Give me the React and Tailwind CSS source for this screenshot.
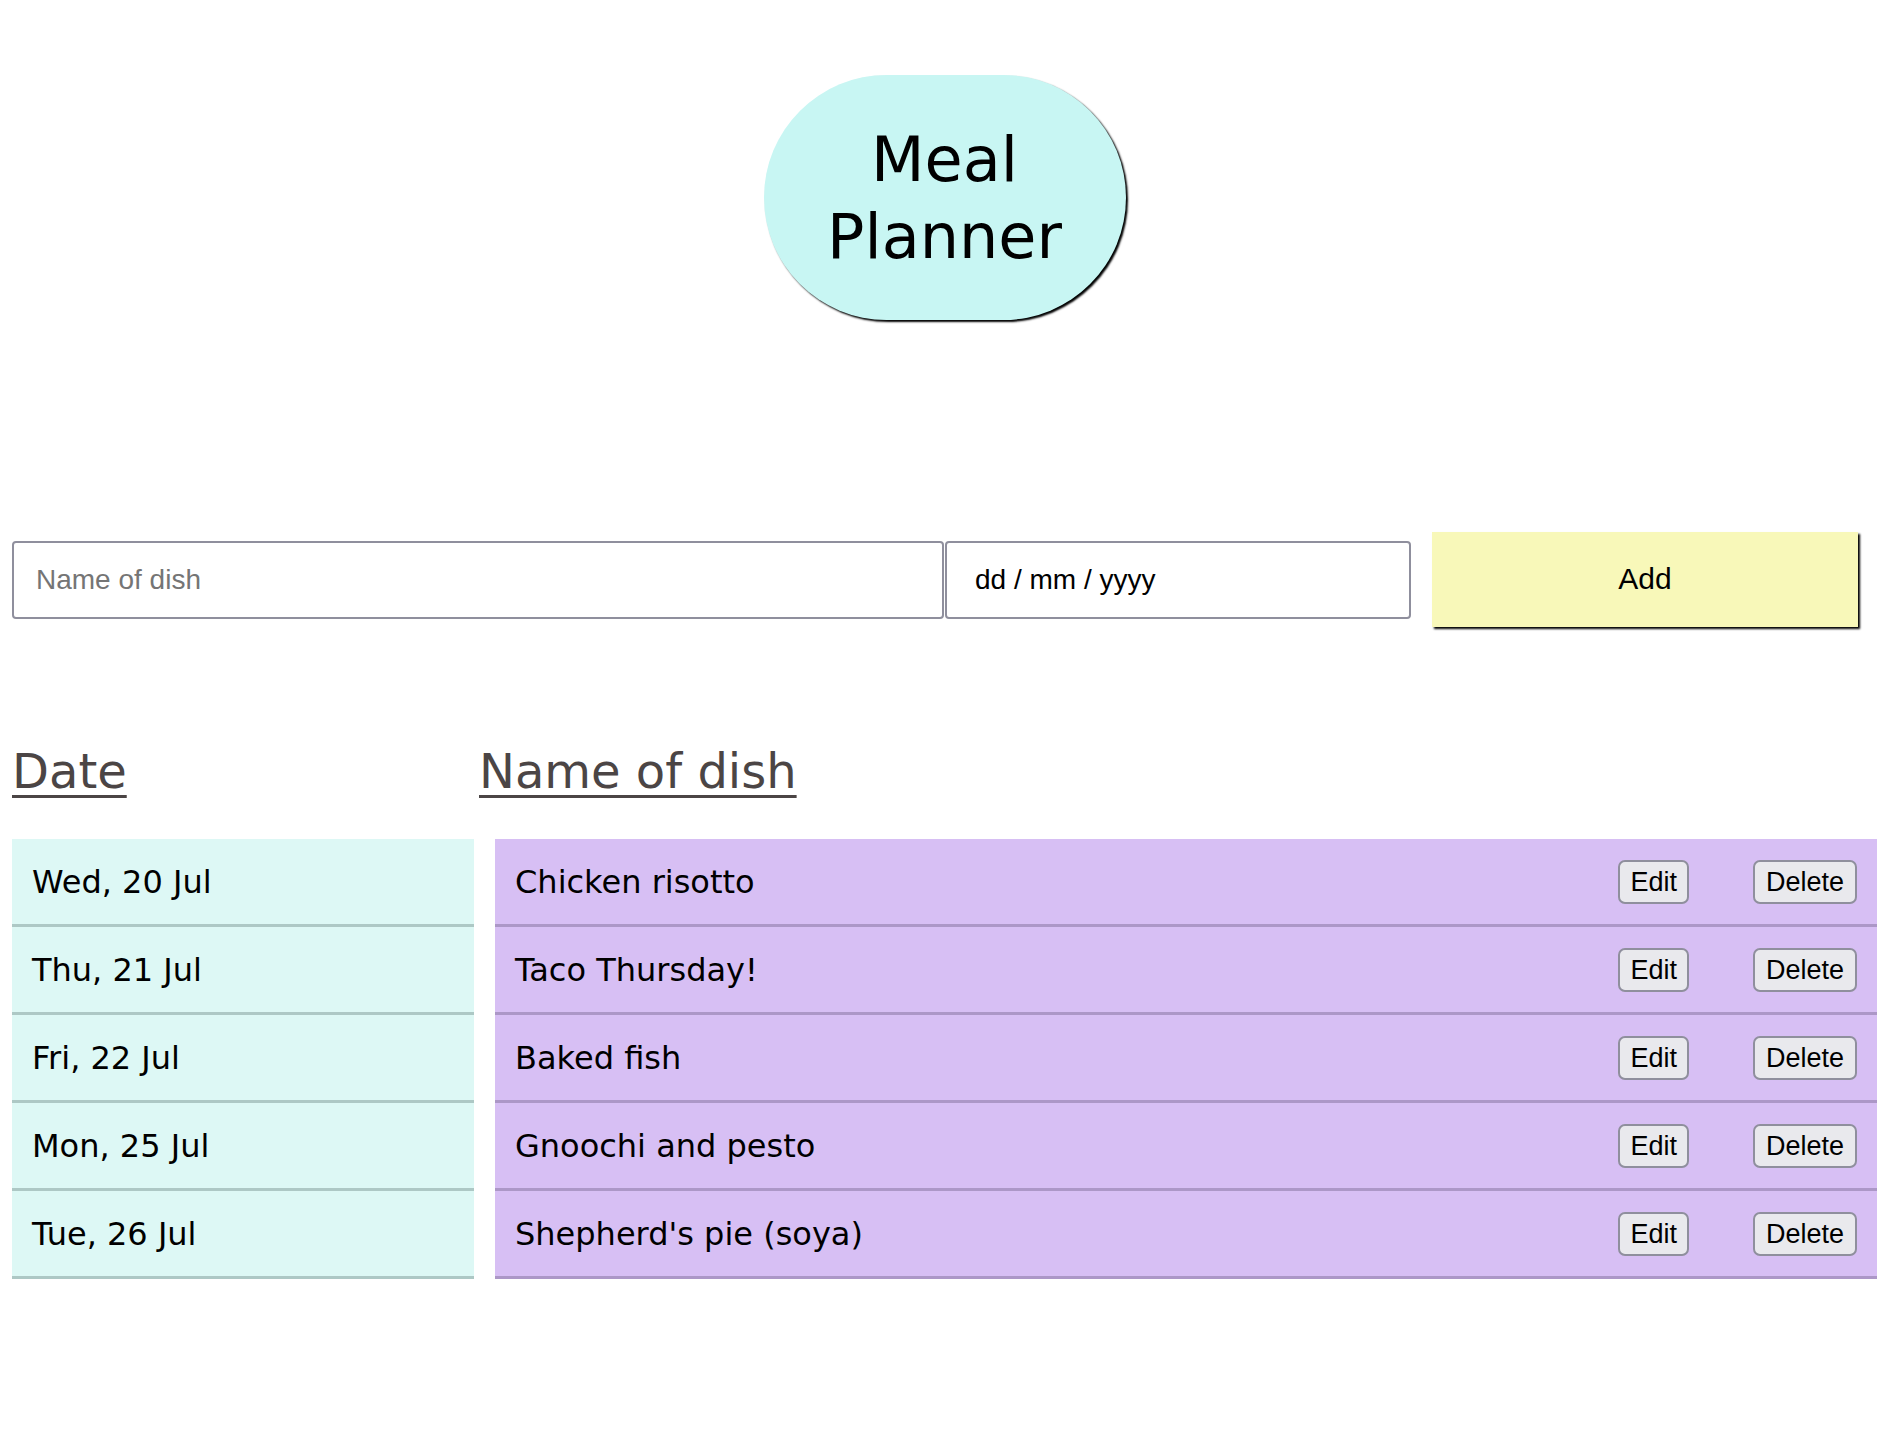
import React from 'react';

const meals = [
  { date: 'Wed, 20 Jul', dish: 'Chicken risotto' },
  { date: 'Thu, 21 Jul', dish: 'Taco Thursday!' },
  { date: 'Fri, 22 Jul', dish: 'Baked fish' },
  { date: 'Mon, 25 Jul', dish: 'Gnoochi and pesto' },
  { date: 'Tue, 26 Jul', dish: "Shepherd's pie (soya)" },
];

const sans = "font-['DejaVu_Sans',Verdana,sans-serif]";
const ui = "font-['Liberation_Sans',Arial,sans-serif]";

const MealRow = ({ date, dish }) => (
  <div className="flex gap-[21px]">
    <div className="w-[462px] h-[88px] flex items-center pl-[20px] bg-[#ddf8f5] border-b-[3px] border-[#adc8c5] text-[32px] text-black">
      {date}
    </div>
    <div className="flex-1 h-[88px] flex items-center pl-[20px] pr-[20px] bg-[#d7bff4] border-b-[3px] border-[#ac97c7] text-[32px] text-black">
      <span className="flex-1">{dish}</span>
      <button className={`${ui} h-[44px] px-[10px] mr-[64px] text-[27px] bg-[#e9e9ed] border-2 border-[#8f8f9d] rounded-[7px] text-black`}>
        Edit
      </button>
      <button className={`${ui} h-[44px] px-[11px] text-[27px] bg-[#e9e9ed] border-2 border-[#8f8f9d] rounded-[7px] text-black`}>
        Delete
      </button>
    </div>
  </div>
);

export default function App() {
  return (
    <div className={`${sans} min-h-screen bg-white pt-[75px] pl-[12px] pr-[15px]`}>
      <div className="flex justify-center">
        <h1 className="w-[362px] h-[245px] rounded-full bg-[#c8f6f3] shadow-[2px_2px_2px_#000] flex flex-col items-center justify-center text-[62px] leading-[77px] text-black">
          <span>Meal</span>
          <span>Planner</span>
        </h1>
      </div>

      <div className="mt-[212px] flex items-center h-[95px]">
        <input
          type="text"
          placeholder="Name of dish"
          className={`${ui} w-[932px] h-[78px] px-[22px] text-[28px] border-2 border-[#8f8f9d] rounded-[4px] placeholder:text-[#757575] outline-none`}
        />
        <input
          type="text"
          placeholder="dd / mm / yyyy"
          className={`${ui} ml-[1px] w-[466px] h-[78px] px-[28px] text-[28px] border-2 border-[#8f8f9d] rounded-[4px] placeholder:text-black outline-none`}
        />
        <button className={`${ui} ml-[21px] w-[426px] h-[95px] bg-[#f8f8b9] shadow-[2px_2px_2px_#000] text-[30px] text-black pb-[3px]`}>
          Add
        </button>
      </div>

      <div className="mt-[116px] flex h-[56px] text-[48px] leading-[56px] text-[#4b4545] underline decoration-[3px] underline-offset-[7px]">
        <span className="w-[467px]">Date</span>
        <span>Name of dish</span>
      </div>

      <div className="mt-[40px] flex flex-col">
        {meals.map((m) => (
          <MealRow key={m.date} date={m.date} dish={m.dish} />
        ))}
      </div>
    </div>
  );
}
